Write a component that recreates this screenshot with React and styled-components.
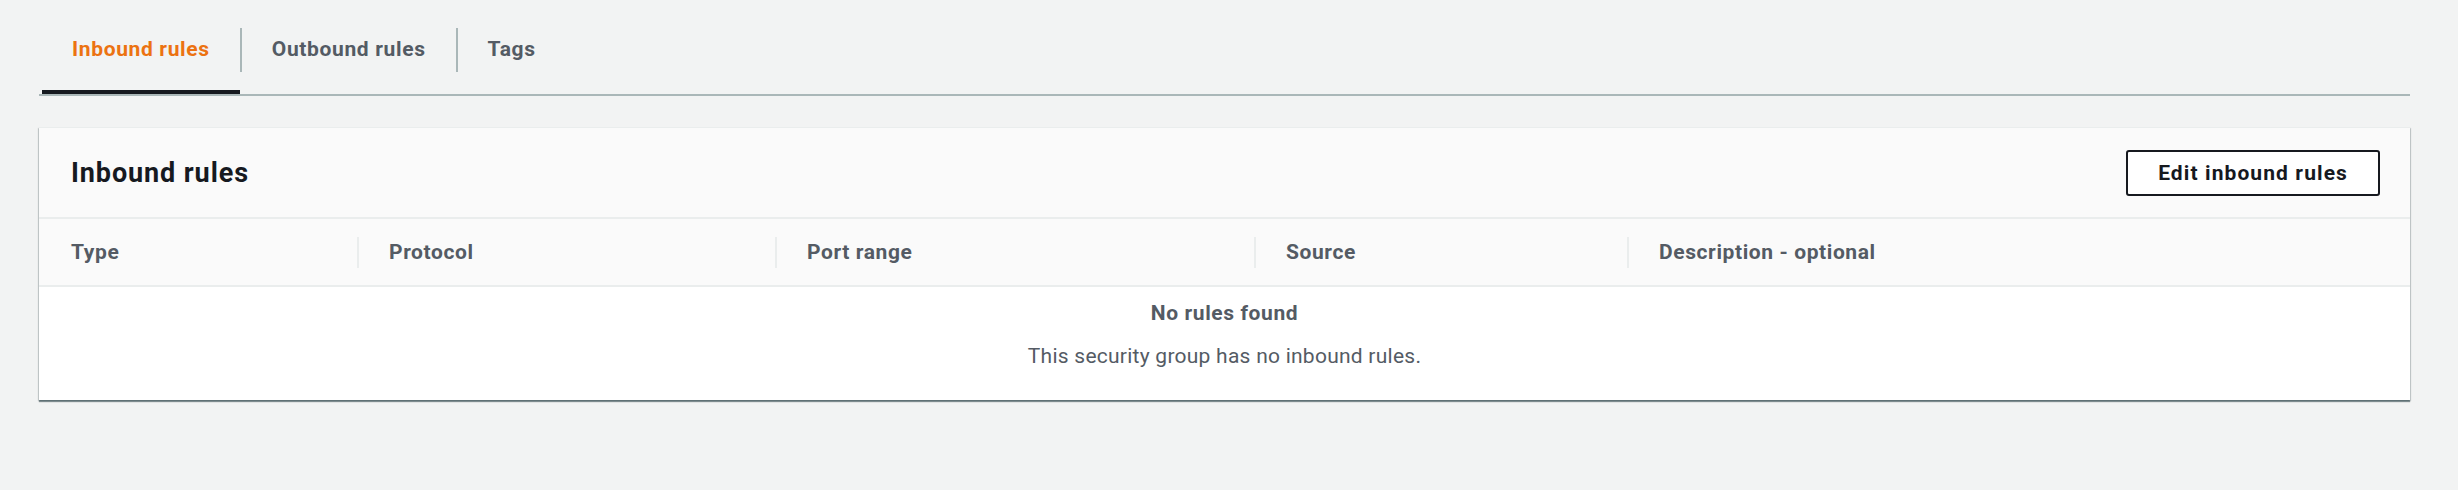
import React from 'react'
import styled, { createGlobalStyle } from 'styled-components'

const GlobalStyle = createGlobalStyle`
html, body {
    margin: 0;
    padding: 0;
    background: #f2f3f3;
}
body {
    font-family: Roboto, "Liberation Sans", Arial, sans-serif;
    color: #16191f;
}
`;

const Page = styled.div`
padding: 0 48px 0 39px;
height: 490px;
box-sizing: border-box;
`;

const TabBar = styled.div`
display: flex;
align-items: flex-start;
border-bottom: 2px solid #aab7b8;
padding-left: 3px;
`;
const Tab = styled.div`
height: 94px;
box-sizing: border-box;
padding: 8px 30px 0;
display: flex;
align-items: center;
border-bottom: 4px solid ${(p) => (p.$active ? '#16191f' : 'transparent')};
color: ${(p) => (p.$active ? '#ec7211' : '#545b64')};
font-size: 21px;
font-weight: 700;
letter-spacing: 0.65px;
line-height: 30px;
white-space: nowrap;
cursor: pointer;
`;
const TabDivider = styled.span`
width: 2px;
height: 44px;
margin-top: 28px;
background: #aab7b8;
`;

const Card = styled.section`
margin-top: 31px;
background: #fff;
border-top: 1px solid #eaeded;
box-shadow: 0 2px 1px 0 rgba(0, 28, 36, 0.45), 1px 1px 1px 0 rgba(0, 28, 36, 0.15),
    -1px 1px 1px 0 rgba(0, 28, 36, 0.15);
`;
const CardHeader = styled.div`
display: flex;
align-items: center;
justify-content: space-between;
padding: 22px 30px 21px 32px;
background: #fafafa;
border-bottom: 2px solid #eaeded;
`;
const CardTitle = styled.h2`
margin: 0;
font-size: 27px;
line-height: 33px;
font-weight: 700;
letter-spacing: 0.9px;
color: #16191f;
`;
const Button = styled.button`
height: 46px;
padding: 0 30px;
border: 2px solid #16191f;
border-radius: 3px;
background: #fff;
color: #16191f;
font-family: inherit;
font-size: 21px;
font-weight: 700;
letter-spacing: 1.1px;
cursor: pointer;
`;

const HeadRow = styled.div`
display: grid;
grid-template-columns: 318px 418px 479px 373px 1fr;
align-items: center;
height: 66px;
background: #fafafa;
border-bottom: 2px solid #eaeded;
`;
const HeadCell = styled.div`
height: 31px;
display: flex;
align-items: center;
box-sizing: border-box;
padding-left: ${(p) => (p.$first ? '32px' : '30px')};
border-left: ${(p) => (p.$first ? 'none' : '2px solid #eaeded')};
color: #545b64;
font-size: 21px;
font-weight: 700;
letter-spacing: 0.6px;
white-space: nowrap;
`;

const Empty = styled.div`
padding: 11px 0 29px;
text-align: center;
color: #545b64;
font-size: 21px;
line-height: 30px;
`;
const EmptyTitle = styled.div`
font-weight: 700;
letter-spacing: 0.6px;
`;
const EmptyText = styled.div`
margin-top: 13px;
letter-spacing: 0.25px;
`;

const columns = ['Type', 'Protocol', 'Port range', 'Source', 'Description - optional'];

export default function App() {
    return (
        <Page>
            <GlobalStyle />
            <TabBar>
                <Tab $active>Inbound rules</Tab>
                <TabDivider />
                <Tab>Outbound rules</Tab>
                <TabDivider />
                <Tab>Tags</Tab>
            </TabBar>

            <Card>
                <CardHeader>
                    <CardTitle>Inbound rules</CardTitle>
                    <Button>Edit inbound rules</Button>
                </CardHeader>
                <HeadRow>
                    {columns.map((c, i) => (
                        <HeadCell key={c} $first={i === 0}>{c}</HeadCell>
                    ))}
                </HeadRow>
                <Empty>
                    <EmptyTitle>No rules found</EmptyTitle>
                    <EmptyText>This security group has no inbound rules.</EmptyText>
                </Empty>
            </Card>
        </Page>
    )
}
